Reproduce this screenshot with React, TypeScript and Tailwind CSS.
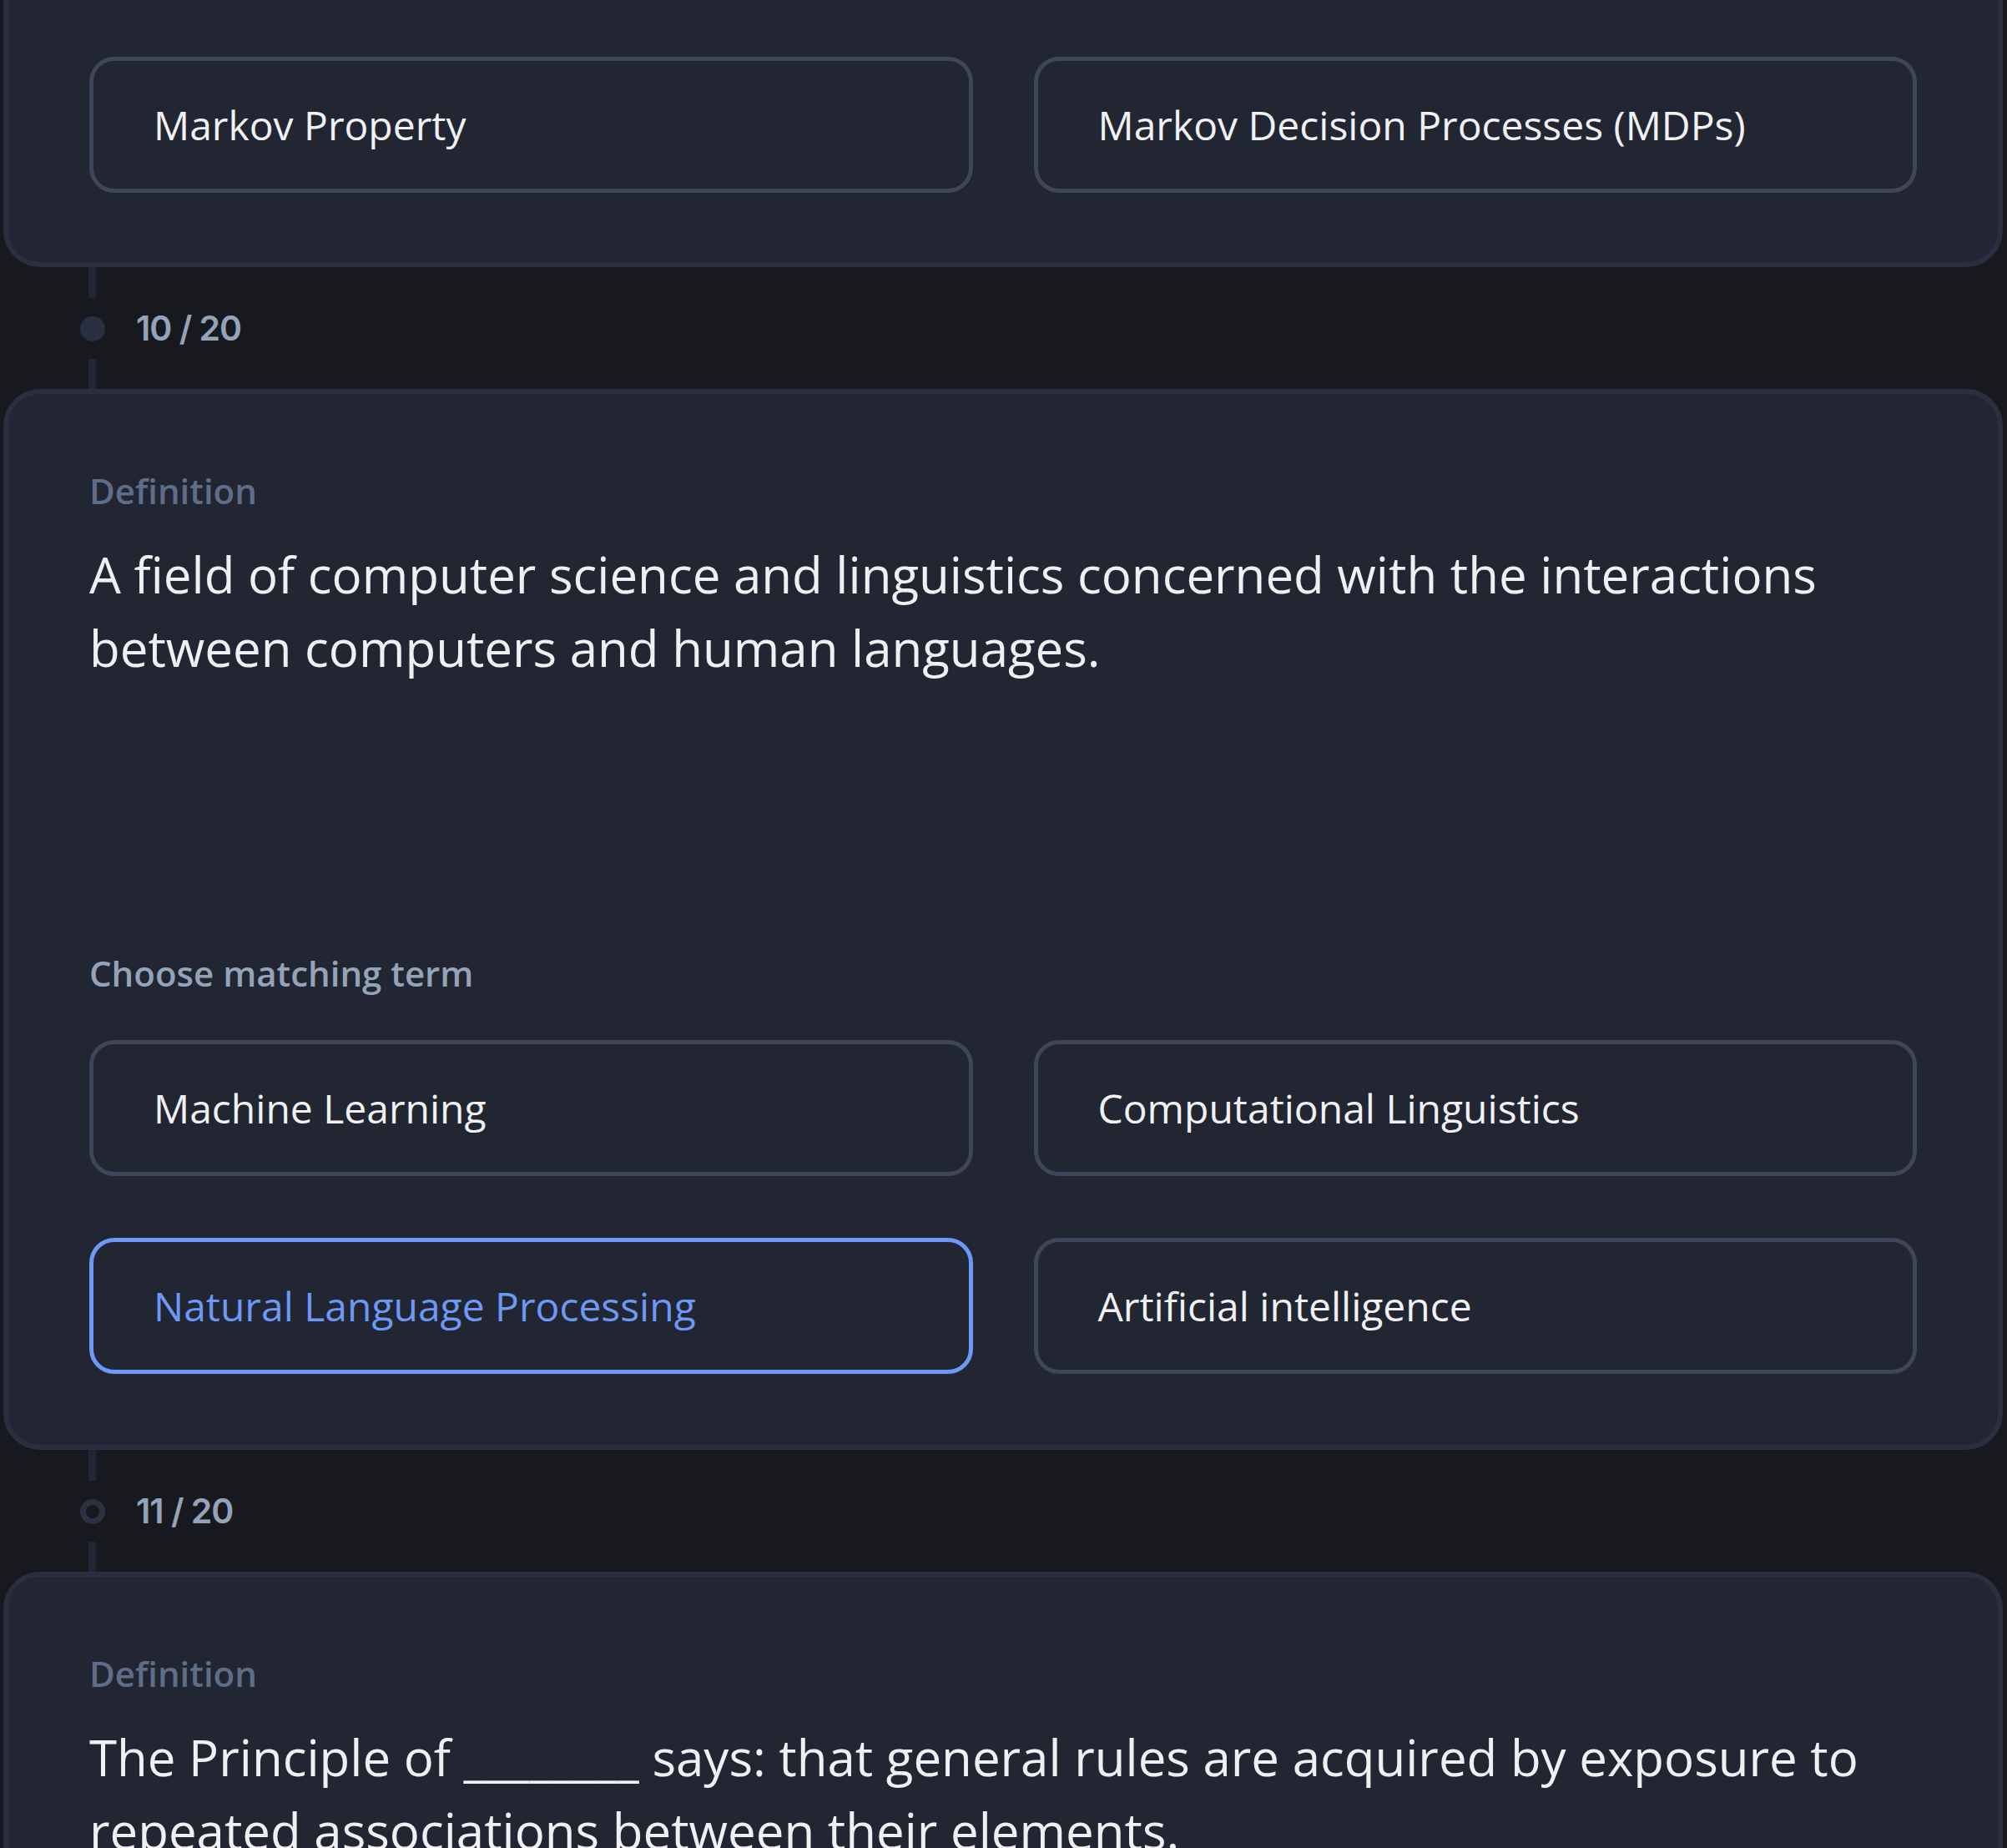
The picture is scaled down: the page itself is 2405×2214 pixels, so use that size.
import React from "react";

type Option = { label: string; selected?: boolean };

const font = { fontFamily: '"Open Sans", "Noto Sans", sans-serif' };

function OptionBox({ option }: { option: Option }) {
  return (
    <div
      className={
        option.selected
          ? "flex h-[163px] items-center rounded-[30px] border-[5px] border-[#6d98f6] px-[72px] text-[48px] text-[#6d98f6]"
          : "flex h-[163px] items-center rounded-[30px] border-[5px] border-[#3e4659] px-[72px] text-[48px] text-[#f1f1f3]"
      }
    >
      {option.label}
    </div>
  );
}

function OptionGrid({ options }: { options: Option[] }) {
  return (
    <div className="grid grid-cols-2 gap-x-[73px] gap-y-[74px]">
      {options.map((o) => (
        <OptionBox key={o.label} option={o} />
      ))}
    </div>
  );
}

function Step({ label, done }: { label: string; done: boolean }) {
  return (
    <div className="flex flex-col">
      <div className="ml-[102px] h-[37px] w-[9px] bg-[#202633]" />
      <div className="flex h-[73px] items-center gap-[37px] pl-[92px]">
        {done ? (
          <div className="h-[30px] w-[30px] rounded-full bg-[#283041]" />
        ) : (
          <div className="h-[30px] w-[30px] rounded-full border-[7px] border-[#2b3342]" />
        )}
        <span
          className="text-[41px] font-semibold tracking-tight text-[#94a3b8]"
          style={{ fontFamily: "Inter, sans-serif" }}
        >
          {label}
        </span>
      </div>
      <div className="ml-[102px] h-[36px] w-[9px] bg-[#202633]" />
    </div>
  );
}

function QuestionCard({
  definition,
  options,
}: {
  definition: string;
  options?: Option[];
}) {
  return (
    <div className="rounded-[44px] border-[6px] border-[#292f3e] bg-[#212632] px-[97px] pb-[85px] pt-[86px]">
      <div className="text-[42px] font-semibold leading-[60px] text-[#5f6e88]">
        Definition
      </div>
      <p className="mt-[26px] min-h-[492px] text-[60px] leading-[88px] text-[#f0f0f2]">
        {definition}
      </p>
      {options && (
        <>
          <div className="mb-[50px] text-[42px] font-semibold leading-[60px] text-[#94a3b8]">
            Choose matching term
          </div>
          <OptionGrid options={options} />
        </>
      )}
    </div>
  );
}

export default function App() {
  return (
    <div
      className="h-[2214px] overflow-hidden bg-[#18191f] pl-[4px] pr-[5px]"
      style={font}
    >
      {/* previous question, scrolled mostly out of view */}
      <div className="rounded-b-[44px] border-x-[6px] border-b-[6px] border-[#292f3e] bg-[#212632] px-[97px] pb-[83px] pt-[68px]">
        <OptionGrid
          options={[
            { label: "Markov Property" },
            { label: "Markov Decision Processes (MDPs)" },
          ]}
        />
      </div>

      <Step label="10 / 20" done />

      <QuestionCard
        definition="A field of computer science and linguistics concerned with the interactions between computers and human languages."
        options={[
          { label: "Machine Learning" },
          { label: "Computational Linguistics" },
          { label: "Natural Language Processing", selected: true },
          { label: "Artificial intelligence" },
        ]}
      />

      <Step label="11 / 20" done={false} />

      <QuestionCard
        definition="The Principle of ________ says: that general rules are acquired by exposure to repeated associations between their elements."
        options={[
          { label: "Contiguity" },
          { label: "Association" },
          { label: "Generalization" },
          { label: "Repetition" },
        ]}
      />
    </div>
  );
}
